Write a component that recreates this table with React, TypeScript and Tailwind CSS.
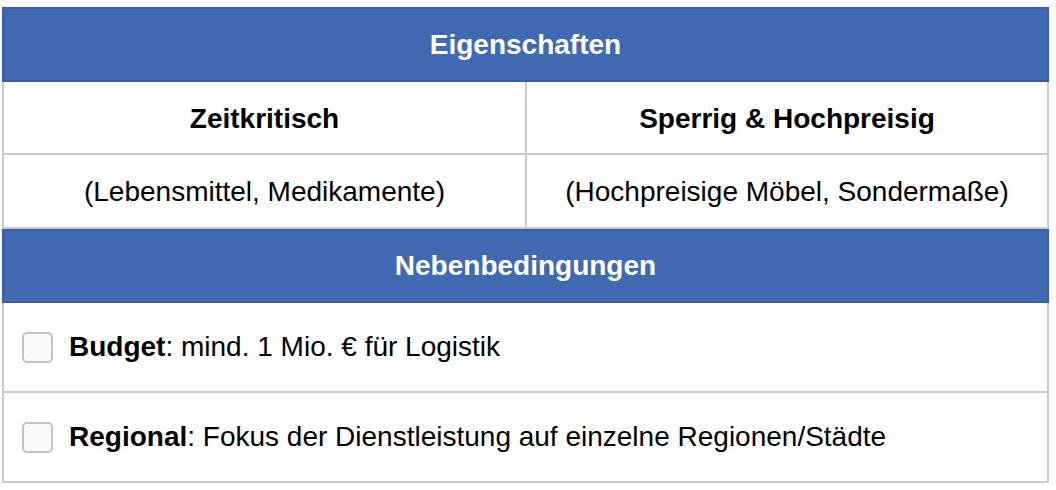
const props = [
  { title: 'Zeitkritisch', detail: '(Lebensmittel, Medikamente)' },
  { title: 'Sperrig & Hochpreisig', detail: '(Hochpreisige Möbel, Sondermaße)' },
];

const constraints = [
  { label: 'Budget', text: 'mind. 1 Mio. € für Logistik' },
  { label: 'Regional', text: 'Fokus der Dienstleistung auf einzelne Regionen/Städte' },
];

function HeaderRow({ children, height }: { children: React.ReactNode; height: string }) {
  return (
    <div className={`${height} flex items-center justify-center bg-[#4169b1] border-2 border-[#3b5e9f] text-white font-bold text-[28px]`}>
      {children}
    </div>
  );
}

export default function App() {
  return (
    <div className="bg-white w-[1056px] h-[490px] pt-[7px] pl-[2px] font-['Liberation_Sans',Arial,sans-serif] text-black">
      <div className="w-[1047px]">
        <HeaderRow height="h-[75px]">Eigenschaften</HeaderRow>

        <div className="grid grid-cols-[523px_1fr] border-x-2 border-b-2 border-[#cacaca] h-[73px]">
          {props.map((p, i) => (
            <div
              key={p.title}
              className={`flex items-center justify-center pt-[2px] font-bold text-[28px] ${i === 0 ? 'border-r-2 border-[#cacaca]' : ''}`}
            >
              {p.title}
            </div>
          ))}
        </div>
        <div className="grid grid-cols-[523px_1fr] border-x-2 border-b-2 border-[#cacaca] h-[74px]">
          {props.map((p, i) => (
            <div
              key={p.detail}
              className={`flex items-center justify-center pt-[2px] text-[28px] ${i === 0 ? 'border-r-2 border-[#cacaca]' : ''}`}
            >
              {p.detail}
            </div>
          ))}
        </div>

        <HeaderRow height="h-[74px]">Nebenbedingungen</HeaderRow>

        {constraints.map((c) => (
          <div
            key={c.label}
            className="h-[90px] flex items-center gap-4 pl-[18px] border-x-2 border-b-2 border-[#cacaca] text-[28px]"
          >
            <span className="w-[31px] h-[31px] shrink-0 rounded-[5px] border-2 border-[#c4c4c4] bg-[#f9f9f9]" />
            <span>
              <b>{c.label}</b>: {c.text}
            </span>
          </div>
        ))}
      </div>
    </div>
  );
}
